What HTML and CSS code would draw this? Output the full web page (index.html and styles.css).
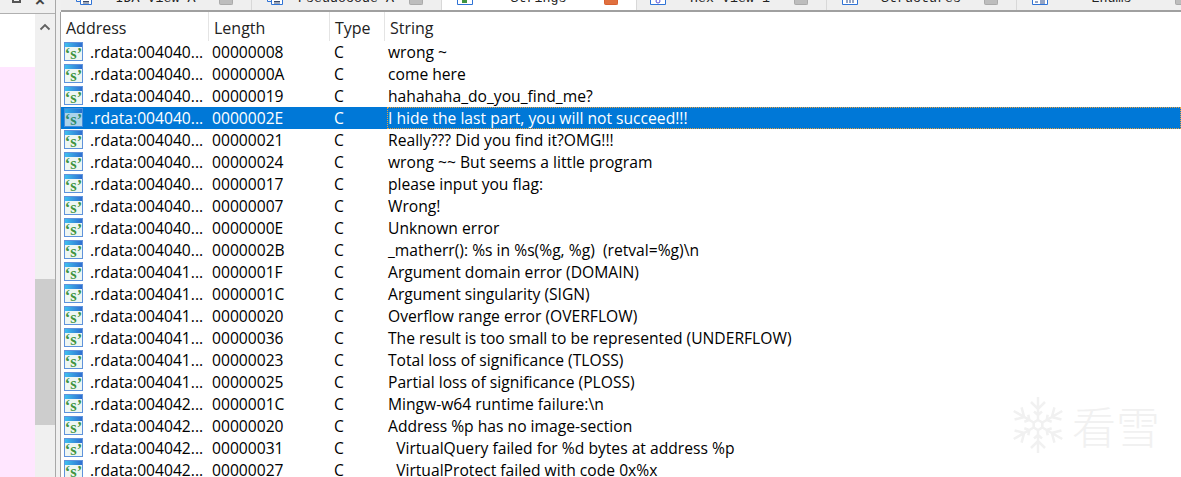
FILE: index.html
```html
<!DOCTYPE html>
<html lang="en">
<head>
<meta charset="utf-8">
<title>Strings</title>
<link rel="stylesheet" href="styles.css">
</head>
<body>
<svg class="defs" width="0" height="0" aria-hidden="true">
  <defs>
    <linearGradient id="bar" x1="0" x2="1" y1="0" y2="0">
      <stop offset="0" stop-color="#3fc0ee"/>
      <stop offset="1" stop-color="#2f6fd0"/>
    </linearGradient>
  </defs>
  <symbol id="s-icon" viewBox="0 0 19 19">
    <rect x="0.500" y="0.500" width="18" height="18" fill="#eef6f2" stroke="#5f93dc"/>
    <rect x="1" y="1" width="17" height="4" fill="url(#bar)"/>
    <text x="9.500" y="16.500" text-anchor="middle" class="s-glyph">‘s’</text>
  </symbol>
</svg>
<div class="app">
  <aside class="side">
    <div class="side-top">
      <div class="winbtns"><span class="wb-square"></span><span class="wb-x">×</span></div>
    </div>
    <div class="side-body">
      <div class="tree"><div class="tree-white"></div><div class="tree-pink"></div></div>
      <div class="scroll">
        <svg class="up" width="12" height="8" viewBox="0 0 12 8"><path d="M1.500 6.500 6 2l4.500 4.500" fill="none" stroke="#606060" stroke-width="1.800"/></svg>
        <div class="thumb"></div>
      </div>
    </div>
  </aside>
  <div class="gap"></div>
  <main class="main">
    <nav class="tabs">
      <div class="tab t1">
        <svg class="ti" width="16" height="5" viewBox="0 0 16 5"><path d="M.5 0V1.500H4.500M4.500 0V4.500H15.500V0" fill="#fff" stroke="#2f73d6"/><path d="M7 1.500H13M7 3H13" stroke="#3a4a6a"/></svg>
        <span class="tl">IDA View-A</span><b class="tx"></b>
      </div>
      <div class="tab t2">
        <svg class="ti" width="16" height="5" viewBox="0 0 16 5"><path d="M.5 0V1.500H4.500M4.500 0V4.500H15.500V0" fill="#fff" stroke="#2f73d6"/><path d="M7 1.500H13M7 3H13" stroke="#3a4a6a"/></svg>
        <span class="tl">Pseudocode-A</span><b class="tx"></b>
      </div>
      <div class="tab t3 on">
        <svg class="ti" width="16" height="5" viewBox="0 0 16 5"><path d="M.5 0V4.500H15.500V0" fill="#fff" stroke="#2f73d6"/><rect x="5" y="0" width="5" height="3" fill="#3f9440"/></svg>
        <span class="tl">Strings</span><b class="tx red"></b>
      </div>
      <div class="tab t4">
        <svg class="ti" width="16" height="5" viewBox="0 0 16 5"><path d="M.5 0V4.500H15.500V0" fill="#fff" stroke="#2f73d6"/><circle cx="8" cy="1" r="2" fill="#fff" stroke="#5a50d8"/></svg>
        <span class="tl">Hex View-1</span><b class="tx"></b>
      </div>
      <div class="tab t5">
        <svg class="ti" width="16" height="5" viewBox="0 0 16 5"><path d="M.5 0V4.500H15.500V0" fill="#fff" stroke="#2f73d6"/><path d="M5 3V0M8 3V0M11 3V0" stroke="#2a4a8a"/></svg>
        <span class="tl">Structures</span><b class="tx"></b>
      </div>
      <div class="tab t6">
        <svg class="ti" width="16" height="5" viewBox="0 0 16 5"><path d="M.5 0V4.500H15.500V0" fill="#fff" stroke="#2f73d6"/><path d="M3 2H6M8 1H13M8 3H13" stroke="#2a4a8a"/></svg>
        <span class="tl">Enums</span><b class="tx"></b>
      </div>
    </nav>
    <div class="table-wrap">
      <div class="row head">
        <div class="c a">Address</div><div class="c l">Length</div><div class="c t">Type</div><div class="c s">String</div>
      </div>
      <div class="row"><svg class="ic"><use href="#s-icon"/></svg><div class="c a">.rdata:004040...</div><div class="c l">00000008</div><div class="c t">C</div><div class="c s">wrong ~</div></div>
      <div class="row"><svg class="ic"><use href="#s-icon"/></svg><div class="c a">.rdata:004040...</div><div class="c l">0000000A</div><div class="c t">C</div><div class="c s">come here</div></div>
      <div class="row"><svg class="ic"><use href="#s-icon"/></svg><div class="c a">.rdata:004040...</div><div class="c l">00000019</div><div class="c t">C</div><div class="c s">hahahaha_do_you_find_me?</div></div>
      <div class="row sel"><svg class="ic"><use href="#s-icon"/></svg><div class="c a">.rdata:004040...</div><div class="c l">0000002E</div><div class="c t">C</div><div class="c s"><span class="focus">I hide the last part, you will not succeed!!!</span></div></div>
      <div class="row"><svg class="ic"><use href="#s-icon"/></svg><div class="c a">.rdata:004040...</div><div class="c l">00000021</div><div class="c t">C</div><div class="c s">Really??? Did you find it?OMG!!!</div></div>
      <div class="row"><svg class="ic"><use href="#s-icon"/></svg><div class="c a">.rdata:004040...</div><div class="c l">00000024</div><div class="c t">C</div><div class="c s">wrong ~~ But seems a little program</div></div>
      <div class="row"><svg class="ic"><use href="#s-icon"/></svg><div class="c a">.rdata:004040...</div><div class="c l">00000017</div><div class="c t">C</div><div class="c s">please input you flag:</div></div>
      <div class="row"><svg class="ic"><use href="#s-icon"/></svg><div class="c a">.rdata:004040...</div><div class="c l">00000007</div><div class="c t">C</div><div class="c s">Wrong!</div></div>
      <div class="row"><svg class="ic"><use href="#s-icon"/></svg><div class="c a">.rdata:004040...</div><div class="c l">0000000E</div><div class="c t">C</div><div class="c s">Unknown error</div></div>
      <div class="row"><svg class="ic"><use href="#s-icon"/></svg><div class="c a">.rdata:004040...</div><div class="c l">0000002B</div><div class="c t">C</div><div class="c s">_matherr(): %s in %s(%g, %g)&nbsp; (retval=%g)\n</div></div>
      <div class="row"><svg class="ic"><use href="#s-icon"/></svg><div class="c a">.rdata:004041...</div><div class="c l">0000001F</div><div class="c t">C</div><div class="c s">Argument domain error (DOMAIN)</div></div>
      <div class="row"><svg class="ic"><use href="#s-icon"/></svg><div class="c a">.rdata:004041...</div><div class="c l">0000001C</div><div class="c t">C</div><div class="c s">Argument singularity (SIGN)</div></div>
      <div class="row"><svg class="ic"><use href="#s-icon"/></svg><div class="c a">.rdata:004041...</div><div class="c l">00000020</div><div class="c t">C</div><div class="c s">Overflow range error (OVERFLOW)</div></div>
      <div class="row"><svg class="ic"><use href="#s-icon"/></svg><div class="c a">.rdata:004041...</div><div class="c l">00000036</div><div class="c t">C</div><div class="c s">The result is too small to be represented (UNDERFLOW)</div></div>
      <div class="row"><svg class="ic"><use href="#s-icon"/></svg><div class="c a">.rdata:004041...</div><div class="c l">00000023</div><div class="c t">C</div><div class="c s">Total loss of significance (TLOSS)</div></div>
      <div class="row"><svg class="ic"><use href="#s-icon"/></svg><div class="c a">.rdata:004041...</div><div class="c l">00000025</div><div class="c t">C</div><div class="c s">Partial loss of significance (PLOSS)</div></div>
      <div class="row"><svg class="ic"><use href="#s-icon"/></svg><div class="c a">.rdata:004042...</div><div class="c l">0000001C</div><div class="c t">C</div><div class="c s">Mingw-w64 runtime failure:\n</div></div>
      <div class="row"><svg class="ic"><use href="#s-icon"/></svg><div class="c a">.rdata:004042...</div><div class="c l">00000020</div><div class="c t">C</div><div class="c s">Address %p has no image-section</div></div>
      <div class="row"><svg class="ic"><use href="#s-icon"/></svg><div class="c a">.rdata:004042...</div><div class="c l">00000031</div><div class="c t">C</div><div class="c s">&nbsp; VirtualQuery failed for %d bytes at address %p</div></div>
      <div class="row"><svg class="ic"><use href="#s-icon"/></svg><div class="c a">.rdata:004042...</div><div class="c l">00000027</div><div class="c t">C</div><div class="c s">&nbsp; VirtualProtect failed with code 0x%x</div></div>
      <div class="mark">
        <svg class="flake" width="52" height="58" viewBox="-26 -29 52 58">
          <g id="arm"><path d="M0-5V-28M-7-23 0-16 7-23M-4-13.500 0-10 4-13.500"/></g>
          <use href="#arm" transform="rotate(60)"/>
          <use href="#arm" transform="rotate(120)"/>
          <use href="#arm" transform="rotate(180)"/>
          <use href="#arm" transform="rotate(240)"/>
          <use href="#arm" transform="rotate(300)"/>
          <path d="M0-5 4.300-2.500V2.500L0 5-4.300 2.500V-2.500Z"/>
        </svg>
        <span class="mark-t">看雪</span>
      </div>
    </div>
  </main>
</div>
</body>
</html>
```
FILE: styles.css
```css
* { box-sizing: border-box; }
html, body { margin: 0; height: 100%; overflow: hidden; background: #f0f0f0; }
body { font-family: "Open Sans", "Noto Sans", sans-serif; color: #000; }
.defs { position: absolute; }
.s-glyph { font: 700 16.500px "Liberation Serif", serif; fill: #3f9440; }
.app { display: flex; width: 1181px; height: 477px; }
.side { flex: none; width: 56px; display: flex; flex-direction: column; border-right: 1px solid #a8a8a8; }
.gap { flex: none; width: 4px; background: #f0f0f0; }
.side-top { flex: none; height: 14px; background: #f0f0f0; border-bottom: 1px solid #b0b0b0; overflow: hidden; }
.winbtns { display: flex; gap: 14px; padding-left: 12px; margin-top: -6px; align-items: flex-start; }
.wb-square { width: 9px; height: 9px; border: 2px solid #555; }
.wb-x { font: 700 17px/14px "Liberation Sans", sans-serif; color: #444; }
.side-body { flex: 1; display: flex; min-height: 0; }
.tree { flex: none; width: 35px; display: flex; flex-direction: column; }
.tree-white { height: 53px; background: #fff; }
.tree-pink { flex: 1; background: #ffe6ff; }
.scroll { flex: none; width: 20px; background: #f0f0f0; display: flex; flex-direction: column; align-items: center; padding-top: 9px; }
.up { flex: none; }
.thumb { width: 20px; height: 146px; background: #cdcdcd; margin-top: 248px; }
.main { flex: 1; min-width: 0; display: flex; flex-direction: column; }
.tabs { flex: none; height: 12px; display: flex; background: #efefef; border-bottom: 2px solid #a0a0a0; overflow: hidden; margin-left: 1px; }
.tab { flex: none; height: 10px; display: flex; align-items: flex-start; padding: 0 18px 0 15px; border-right: 1px solid #d8d8d8; }
.t1 { width: 191px; } .t2 { width: 190px; } .t3 { width: 195px; } .t4 { width: 190px; padding-left: 13px; } .t5 { width: 190px; } .t6 { width: 190px; border-right: 0; }
.on { background: #fff; }
.ti { flex: none; display: block; }
.tl { flex: 1; min-width: 0; height: 14px; margin-top: -8px; text-align: center; font: 13.300px/14px "Liberation Mono", monospace; white-space: nowrap; color: #222; }
.tx { flex: none; width: 14px; height: 5px; border-radius: 0 0 2px 2px; background: #bdbdbd; border: 1px solid #aaa; border-top: 0; }
.tx.red { background: #e0703f; border-color: #d86030; }
.table-wrap { flex: 1; min-height: 0; background: #fff; position: relative; overflow: hidden; border-left: 1px solid #a0a0a0; }
.row { display: grid; grid-template-columns: 151px 122px 54px 1fr; height: 22px; align-items: center; font-size: 15.650px; line-height: 22px; white-space: nowrap; position: relative; }
.row .ic { position: absolute; left: 3px; top: 1px; width: 19px; height: 19px; }
.head { height: 29px; color: #222; grid-template-columns: 148px 121px 55px 1fr; font-size: 16px; }
.head .c { height: 29px; padding-top: 3px; line-height: 26px; border-right: 1px solid #e4e4e4; }
.head .s { border-right: 0; }
.row .a { padding-left: 29px; }
.head .a, .head .l, .head .t, .head .s { padding-left: 5px; }
.sel { background: #0078d7; color: #fff; }
.sel .ic { opacity: .72; }
.focus { display: block; margin-left: -1px; padding-left: 1px; outline: 1px dotted #e8a040; outline-offset: -1px; }
.mark { position: absolute; left: 951px; top: 384px; display: flex; align-items: center; gap: 8px; }
.flake { fill: none; stroke: #f1f1f1; stroke-width: 2.500; }
.mark-t { font: 300 44px/1 "Noto Sans CJK SC", sans-serif; color: #f1f1f1; }
```
